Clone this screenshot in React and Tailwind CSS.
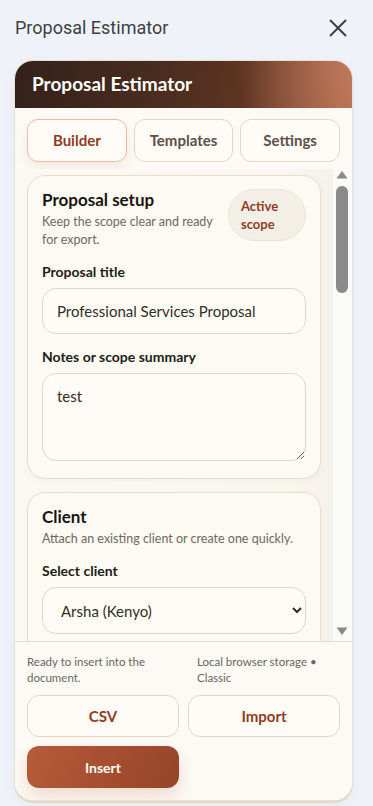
import React from "react";

function Field({ label, children }) {
  return (
    <div className="flex flex-col gap-[8px]">
      <div className="text-[14px] font-bold text-[#221c18] leading-[16px]">{label}</div>
      {children}
    </div>
  );
}

function Input({ value }) {
  return (
    <input
      readOnly
      value={value}
      className="h-[46px] w-full rounded-[14px] border border-[#e3d6c3] bg-[#fffcf7] px-[14px] text-[15px] text-[#332c28] outline-none"
    />
  );
}

function Card({ title, subtitle, aside, children }) {
  return (
    <div className="rounded-[18px] border border-[#e8dccb] bg-[#fdf9f3] px-[14px] pt-[13px] pb-[17px] shadow-[0_2px_8px_rgba(120,90,60,0.05)]">
      <div className="flex items-start justify-between gap-[8px]">
        <div className="flex min-w-0 flex-1 flex-col gap-[2px]">
          <div className="text-[17px] font-bold leading-[22px] text-[#1a1512]">{title}</div>
          <div className="text-[12.5px] leading-[18px] text-[#6f6863]">{subtitle}</div>
        </div>
        {aside}
      </div>
      <div className="mt-[15px] flex flex-col gap-[15px]">{children}</div>
    </div>
  );
}

function Scrollbar() {
  return (
    <div className="flex w-[19px] shrink-0 flex-col items-center bg-[#fafaf8] pt-[1px] pb-[5px] pr-[2px]">
      <svg width="12" height="9" viewBox="0 0 12 9">
        <path d="M6 1 L11.5 8.5 L0.5 8.5 Z" fill="#8a8a8a" />
      </svg>
      <div className="mt-[7px] h-[107px] w-[12px] rounded-full bg-[#8a8a8a]" />
      <div className="flex-1" />
      <svg width="12" height="9" viewBox="0 0 12 9">
        <path d="M0.5 0.5 L11.5 0.5 L6 8 Z" fill="#8a8a8a" />
      </svg>
    </div>
  );
}

export default function App() {
  return (
    <div className="min-h-[806px] w-full bg-[#eff3f9] pl-[15px] font-['Lato',sans-serif]">
      <div className="flex h-[55px] w-[337px] items-center justify-between">
        <div className="font-['Roboto',sans-serif] text-[18px] text-[#3c4043]">Proposal Estimator</div>
        <svg width="18" height="18" viewBox="0 0 18 18" className="mr-[5px]">
          <path d="M1 1 L17 17 M17 1 L1 17" stroke="#3c4043" strokeWidth="2" fill="none" />
        </svg>
      </div>

      <div className="mt-[6px] flex w-[337px] flex-col overflow-hidden rounded-[18px] bg-[#fdfaf5] shadow-[0_0_0_1px_#e9e0d2,0_2px_0_1px_#e3d9c8,0_4px_12px_rgba(120,90,60,0.08)]">
        <div className="flex h-[47px] shrink-0 items-center px-[17px] bg-[radial-gradient(circle_at_100%_0%,rgba(205,140,110,0.55),transparent_35%),linear-gradient(100deg,#33211a_0%,#4b2d1f_45%,#5e3421_68%,#b5694a_100%)]">
          <div className="text-[19px] font-bold text-white">Proposal Estimator</div>
        </div>

        <div className="grid grid-cols-3 gap-[7px] px-[12px] pt-[11px] pb-[7px]">
          <div className="flex h-[43px] items-center justify-center rounded-[11px] border border-[#e8bba8] bg-[#fffbf7] text-[15px] font-bold text-[#8f3b1f] shadow-[0_6px_14px_rgba(170,110,80,0.12)]">
            Builder
          </div>
          <div className="flex h-[43px] items-center justify-center rounded-[11px] border border-[#e6d6c6] bg-[#fffbf7] text-[15px] font-bold text-[#5c5049]">
            Templates
          </div>
          <div className="flex h-[43px] items-center justify-center rounded-[11px] border border-[#e6d6c6] bg-[#fffbf7] text-[15px] font-bold text-[#5c5049]">
            Settings
          </div>
        </div>

        <div className="flex h-[472px]">
          <div className="min-w-0 flex-1 overflow-hidden bg-[linear-gradient(90deg,#fcf9f4_0%,#fbf7f1_85%,#f6f1e9_100%)]">
            <div className="flex flex-col gap-[13px] pt-[6px] pb-3 pl-[12px] pr-[12px]">
              <Card
                title="Proposal setup"
                subtitle="Keep the scope clear and ready for export."
                aside={
                  <div className="flex h-[52px] w-[78px] shrink-0 flex-col justify-center rounded-full border border-[#ece3d4] bg-[#f4efe6] pl-[12px] text-[13px] font-bold leading-[18px] text-[#8f3b1f]">
                    <span>Active</span>
                    <span>scope</span>
                  </div>
                }
              >
                <Field label="Proposal title">
                  <Input value="Professional Services Proposal" />
                </Field>
                <Field label="Notes or scope summary">
                  <textarea
                    readOnly
                    value="test"
                    className="block h-[88px] w-full resize-y rounded-[14px] border border-[#e3d6c3] bg-[#fffcf7] px-[14px] py-[11px] text-[15px] leading-[22px] text-[#332c28] outline-none"
                  />
                </Field>
              </Card>

              <Card title="Client" subtitle="Attach an existing client or create one quickly.">
                <Field label="Select client">
                  <select
                    defaultValue="arsha"
                    className="h-[47px] w-full rounded-[14px] border border-[#e3d6c3] bg-[#fffcf7] px-[14px] text-[15px] text-[#332c28] outline-none"
                  >
                    <option value="arsha">Arsha (Kenyo)</option>
                    <option value="new">New client</option>
                  </select>
                </Field>
                <Field label="Client name">
                  <Input value="" />
                </Field>
                <Field label="Email">
                  <Input value="" />
                </Field>
              </Card>
            </div>
          </div>
          <Scrollbar />
        </div>

        <div className="border-t border-[#e6dccd] bg-[#fdfaf5] px-[12px] pt-[12px] pb-[12px]">
          <div className="flex justify-between text-[11.5px] leading-[16px] text-[#6b6460]">
            <div className="w-[150px]">Ready to insert into the document.</div>
            <div className="w-[143px]">Local browser storage • Classic</div>
          </div>
          <div className="mt-[9px] grid grid-cols-2 gap-[9px]">
            <div className="flex h-[42px] items-center justify-center rounded-[12px] border border-[#e3d6c3] bg-[#fffbf7] text-[15px] font-bold text-[#8f3b1f]">
              CSV
            </div>
            <div className="flex h-[42px] items-center justify-center rounded-[12px] border border-[#e3d6c3] bg-[#fffbf7] text-[15px] font-bold text-[#8f3b1f]">
              Import
            </div>
            <div className="flex h-[42px] items-center justify-center rounded-[12px] bg-[linear-gradient(115deg,#b55c3a_0%,#a54e30_55%,#954429_100%)] text-[14px] font-bold text-white shadow-[0_8px_18px_rgba(181,91,57,0.2)]">
              Insert
            </div>
          </div>
        </div>
      </div>
    </div>
  );
}
